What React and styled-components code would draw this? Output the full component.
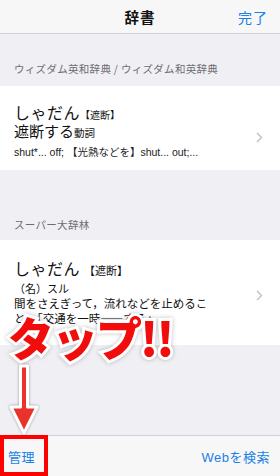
import React from 'react';
import styled, { createGlobalStyle } from 'styled-components';

const GlobalStyle = createGlobalStyle`
  html, body { margin: 0; padding: 0; }
  body {
    width: 280px;
    height: 476px;
    overflow: hidden;
    font-family: "Noto Sans CJK JP", "Noto Sans", sans-serif;
    -webkit-font-smoothing: antialiased;
  }
`;

const Screen = styled.div`
  position: relative;
  width: 280px;
  height: 476px;
  display: flex;
  flex-direction: column;
  background: #efeff4;
  overflow: hidden;
`;

const NavBar = styled.div`
  height: 33px;
  flex-shrink: 0;
  display: grid;
  grid-template-columns: 1fr auto 1fr;
  align-items: center;
  background: #f7f7f8;
  border-bottom: 1px solid #d2d2d6;
  padding: 0 12px 0 12px;
`;

const NavTitle = styled.div`
  grid-column: 2;
  font-size: 14.5px;
  font-weight: 700;
  color: #111;
  letter-spacing: 1px;
`;

const NavAction = styled.div`
  justify-self: end;
  font-size: 14px;
  color: #1a7fe6;
  letter-spacing: 1px;
`;

const Content = styled.div`
  flex: 1;
  overflow: hidden;
`;

const SectionHeader = styled.div`
  padding: ${p => p.$top}px 14px ${p => p.$bottom}px 14px;
  font-size: 10.5px;
  line-height: 14px;
  color: #6d6d72;
  letter-spacing: 0.3px;
`;

const Cell = styled.div`
  height: ${p => p.$height}px;
  box-sizing: border-box;
  background: #fff;
  display: flex;
  align-items: flex-start;
  padding: ${p => p.$top}px 17px 0 14px;
  overflow: hidden;
`;

const CellBody = styled.div`
  flex: 1;
  min-width: 0;
  color: #111;
`;

const Headword = styled.div`
  font-size: 16px;
  line-height: 17px;
  letter-spacing: 0.5px;
`;

const Small = styled.span`
  font-size: ${p => p.$size || 10}px;
  letter-spacing: 0;
`;

const Line = styled.div`
  font-size: ${p => p.$size}px;
  line-height: ${p => p.$lh}px;
  margin-top: ${p => p.$mt || 0}px;
  color: ${p => p.$color || '#111'};
  max-width: ${p => p.$maxw ? p.$maxw + 'px' : 'none'};
  font-family: ${p => p.$latin ? '"Liberation Sans", "Noto Sans CJK JP", sans-serif' : 'inherit'};
  white-space: ${p => p.$nowrap ? 'nowrap' : 'normal'};
`;

const ChevronBox = styled.div`
  margin-top: ${p => p.$mt || 0}px;
  width: 7px;
  display: flex;
`;

const Toolbar = styled.div`
  height: 40px;
  flex-shrink: 0;
  background: #f7f7f8;
  border-top: 1px solid #d2d2d6;
  display: flex;
  align-items: center;
  justify-content: space-between;
  padding: 0 10px 0 8px;
`;

const ToolButton = styled.div`
  font-size: 13px;
  color: #1a7fe6;
  letter-spacing: 0.5px;
  font-family: "Liberation Sans", "Noto Sans CJK JP", sans-serif;
`;

const Annotation = styled.div`
  position: absolute;
  left: 8px;
  top: 306px;
  font-size: 46px;
  font-weight: 900;
  line-height: 60px;
  color: #f20d0d;
  letter-spacing: -2px;
  paint-order: stroke fill;
  -webkit-text-stroke: 6px #fff;
  filter: drop-shadow(0 0 2px rgba(0,0,0,0.25));
`;

const ArrowWrap = styled.div`
  position: absolute;
  left: 8px;
  top: 364px;
  width: 32px;
  height: 72px;
  filter: drop-shadow(0 0 1.5px rgba(0,0,0,0.35));
`;

const HighlightBox = styled.div`
  position: absolute;
  left: 0;
  top: 435px;
  width: 48px;
  height: 41px;
  box-sizing: border-box;
  border: 4px solid #ff0000;
`;

const Chevron = () => (
  <svg width="7" height="11" viewBox="0 0 7 11">
    <polyline points="1,1 5.5,5.5 1,10" fill="none" stroke="#c4c4c9" strokeWidth="1.5" />
  </svg>
);

const Arrow = () => (
  <svg width="32" height="72" viewBox="0 0 32 72">
    <path
      d="M12.5 2 H19.5 V43 H29 L16 69 L3 43 H12.5 Z"
      fill="#e8322b"
      stroke="#fff"
      strokeWidth="3"
      strokeLinejoin="round"
    />
  </svg>
);

export default function App() {
  return (
    <>
      <GlobalStyle />
      <Screen>
        <NavBar>
          <NavTitle>辞書</NavTitle>
          <NavAction>完了</NavAction>
        </NavBar>
        <Content>
          <SectionHeader $top={28} $bottom={10}>ウィズダム英和辞典 / ウィズダム和英辞典</SectionHeader>
          <Cell $height={84} $top={18}>
            <CellBody>
              <Headword>しゃだん<Small $size={10}>【遮断】</Small></Headword>
              <Line $size={15} $lh={16}>遮断する<Small $size={10.5}>動詞</Small></Line>
              <Line $size={10.5} $lh={14} $mt={4} $latin $nowrap $color="#222">shut*... off; 【光熱などを】shut... out;...</Line>
            </CellBody>
            <ChevronBox $mt={28}><Chevron /></ChevronBox>
          </Cell>
          <SectionHeader $top={48} $bottom={8}>スーパー大辞林</SectionHeader>
          <Cell $height={105} $top={20}>
            <CellBody>
              <Headword>しゃだん <Small $size={11}>【遮断】</Small></Headword>
              <Line $size={11} $lh={16} $mt={1}>（名）スル</Line>
              <Line $size={11.5} $lh={15} $maxw={210}>間をさえぎって，流れなどを止めること。「交通を一時――する」</Line>
            </CellBody>
            <ChevronBox $mt={30}><Chevron /></ChevronBox>
          </Cell>
        </Content>
        <Toolbar>
          <ToolButton>管理</ToolButton>
          <ToolButton>Webを検索</ToolButton>
        </Toolbar>
        <Annotation>タップ!!</Annotation>
        <ArrowWrap><Arrow /></ArrowWrap>
        <HighlightBox />
      </Screen>
    </>
  );
}
